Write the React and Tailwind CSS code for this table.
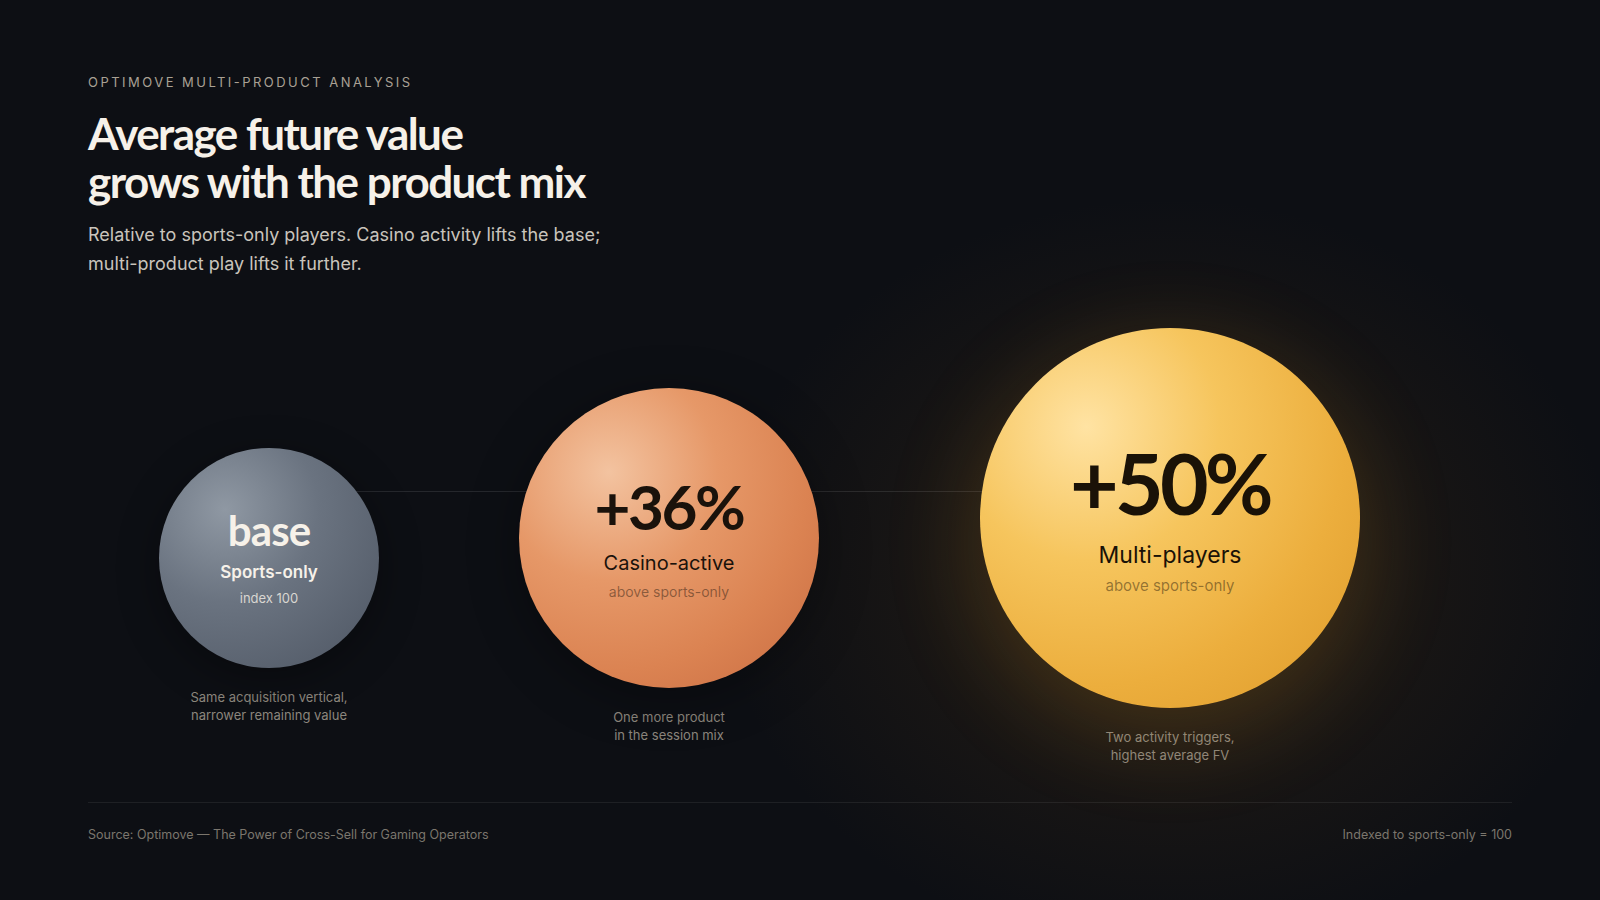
import React from 'react';

const segments = [
  {
    key: 'base',
    size: 'w-[220px] h-[220px]',
    offset: 'pt-[120px]',
    ball: 'bg-[radial-gradient(circle_at_30%_28%,#8f98a3_0%,#6a7380_42%,#4d5562_100%)]',
    glow: 'shadow-[0_10px_40px_rgba(0,0,0,0.35)]',
    value: 'base',
    valueCls: 'text-[42px] text-[#f6f1e9] tracking-[-0.02em]',
    label: 'Sports-only',
    labelCls: 'mt-[10px] text-[17px] leading-[22px] font-semibold text-[#f6f1e9]',
    sub: 'index 100',
    subCls: 'mt-[6px] text-[13px] leading-[18px] text-[#d9d6d1]',
    caption: ['Same acquisition vertical,', 'narrower remaining value'],
  },
  {
    key: 'casino',
    size: 'w-[300px] h-[300px]',
    offset: 'pt-[60px]',
    ball: 'bg-[radial-gradient(circle_at_30%_28%,#f3c3a0_0%,#e69868_36%,#db8352_66%,#c86b41_100%)]',
    glow: 'shadow-[0_10px_50px_rgba(0,0,0,0.35)]',
    value: '+36%',
    valueCls: 'text-[62px] text-[#1a120b] tracking-[-0.04em]',
    label: 'Casino-active',
    labelCls: 'mt-[13px] text-[20px] leading-[26px] text-[#1a120b]',
    sub: 'above sports-only',
    subCls: 'mt-[6px] text-[14px] leading-[20px] text-[#1a120b]/45',
    caption: ['One more product', 'in the session mix'],
  },
  {
    key: 'multi',
    size: 'w-[380px] h-[380px]',
    offset: 'pt-0',
    ball: 'bg-[radial-gradient(circle_at_28%_26%,#ffe3a3_0%,#f6c55d_34%,#ecae3d_66%,#dd9a2a_100%)]',
    glow: 'shadow-[0_24px_90px_8px_rgba(226,156,40,0.18)]',
    value: '+50%',
    valueCls: 'text-[84px] text-[#1a1207] tracking-[-0.045em]',
    label: 'Multi-players',
    labelCls: 'mt-[15px] text-[23px] leading-[30px] text-[#1a1207]',
    sub: 'above sports-only',
    subCls: 'mt-[6px] text-[15px] leading-[20px] text-[#1a1207]/45',
    caption: ['Two activity triggers,', 'highest average FV'],
  },
];

const Segment = ({ s }) => (
  <div className={`flex flex-col items-center ${s.offset}`}>
    <div className={`relative z-10 rounded-full flex flex-col items-center justify-center ${s.size} ${s.ball} ${s.glow}`}>
      <div className={`font-['Lato',sans-serif] font-bold leading-none ${s.valueCls}`}>{s.value}</div>
      <div className={s.labelCls}>{s.label}</div>
      <div className={s.subCls}>{s.sub}</div>
    </div>
    <div className="mt-5 text-center text-[13px] leading-[18px] text-[#8c867d]">
      {s.caption.map((line) => (
        <div key={line}>{line}</div>
      ))}
    </div>
  </div>
);

export default function App() {
  return (
    <div className="w-full h-[900px] overflow-hidden flex flex-col px-[88px] pt-[72px] pb-[56px] font-['Inter','Noto_Sans',sans-serif] bg-[#0d0f14] bg-[radial-gradient(ellipse_640px_540px_at_73%_64%,rgba(96,64,22,0.3),transparent_70%)]">
      <header>
        <p className="text-[13px] leading-[20px] tracking-[0.19em] text-[#a9a194]">
          OPTIMOVE MULTI-PRODUCT ANALYSIS
        </p>
        <h1 className="mt-[17px] font-['Lato',sans-serif] text-[44px] leading-[48px] font-bold tracking-[-0.035em] text-[#f6f1e9]">
          Average future value
          <br />
          grows with the product mix
        </h1>
        <p className="mt-[15px] text-[18px] leading-[29px] text-[#c9c4bc]">
          Relative to sports-only players. Casino activity lifts the base;
          <br />
          multi-product play lifts it further.
        </p>
      </header>

      <div className="relative mt-[50px] ml-[71px] flex items-start gap-[140px]">
        <div className="absolute left-[110px] top-[163px] w-[901px] h-px bg-white/10" />
        <Segment s={segments[0]} />
        <Segment s={segments[1]} />
        <div className="ml-[21px]">
          <Segment s={segments[2]} />
        </div>
      </div>

      <footer className="mt-auto border-t border-white/[0.07] pt-[23px] flex justify-between text-[12.5px] leading-[18px] text-[#7b766d]">
        <span>Source: Optimove — The Power of Cross-Sell for Gaming Operators</span>
        <span>Indexed to sports-only = 100</span>
      </footer>
    </div>
  );
}
